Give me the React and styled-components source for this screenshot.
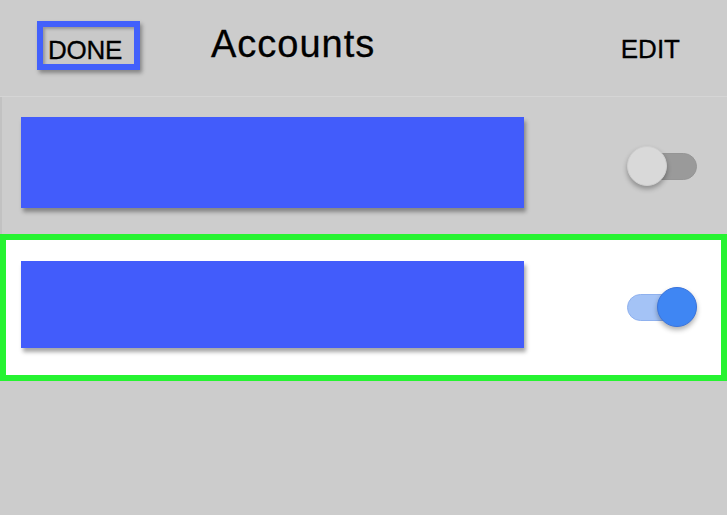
import React, { useState } from "react";
import styled, { createGlobalStyle } from "styled-components";

const Global = createGlobalStyle`
  html, body { margin: 0; padding: 0; background: #cccccc; }
  body { font-family: "Liberation Sans", Arial, sans-serif; }
`;

const Page = styled.div`
  width: 727px;
  height: 515px;
  background: #cccccc;
  overflow: hidden;
`;

const Header = styled.header`
  display: flex;
  align-items: flex-start;
  height: 97px;
  box-sizing: border-box;
  border-bottom: 1px solid #d5d5d5;
`;

const DoneButton = styled.button`
  box-sizing: border-box;
  margin: 21px 0 0 37px;
  width: 103px;
  height: 49px;
  border: 6px solid #4260fb;
  background: #c9c9c9;
  padding: 8px 0 0 5px;
  text-align: left;
  font-family: "Liberation Sans", Arial, sans-serif;
  font-size: 26px;
  line-height: 26px;
  color: #000;
  -webkit-text-stroke: 0.3px #000;
  letter-spacing: -0.3px;
  box-shadow: 2px 3px 4px rgba(0, 0, 0, 0.35), inset 2px 2px 3px rgba(0, 0, 0, 0.25);
  cursor: pointer;
`;

const Title = styled.h1`
  margin: 25px 0 0 71px;
  font-weight: 400;
  font-size: 38px;
  line-height: 38px;
  letter-spacing: 1px;
  color: #000;
  -webkit-text-stroke: 0.3px #000;
`;

const EditButton = styled.span`
  margin: 36px 47px 0 auto;
  font-size: 26px;
  line-height: 26px;
  color: #000;
  -webkit-text-stroke: 0.3px #000;
`;

const Row = styled.div`
  display: flex;
  align-items: flex-start;
  box-sizing: border-box;
  height: ${(p) => (p.$selected ? "147px" : "137px")};
  padding: ${(p) => (p.$selected ? "21px 24px 0 15px" : "20px 30px 0 19px")};
  background: ${(p) => (p.$selected ? "#ffffff" : "#cdcdcd")};
  border: ${(p) => (p.$selected ? "6px solid #26f331" : "none")};
  border-left: ${(p) => (p.$selected ? "6px solid #26f331" : "2px solid #c2c2c2")};
`;

const Redaction = styled.div`
  width: 503px;
  height: ${(p) => p.$h}px;
  background: #425cfb;
  box-shadow: 2px 4px 4px rgba(0, 0, 0, 0.35);
`;

const Toggle = styled.button`
  position: relative;
  margin: ${(p) => p.$mt}px 0 0 auto;
  width: 70px;
  height: 41px;
  padding: 0;
  border: none;
  background: transparent;
  cursor: pointer;
`;

const Track = styled.span`
  position: absolute;
  top: 7px;
  ${(p) => (p.$on ? "left: 0;" : "right: 0;")}
  width: 64px;
  height: 27px;
  box-sizing: border-box;
  border-radius: 14px;
  background: ${(p) => (p.$on ? "#a4c3f6" : "#9a9a9a")};
  border: 1px solid ${(p) => (p.$on ? "#8fb1ee" : "#959595")};
`;

const Knob = styled.span`
  position: absolute;
  top: 0;
  ${(p) => (p.$on ? "right: 0;" : "left: 0;")}
  width: 40px;
  height: 40px;
  box-sizing: border-box;
  border-radius: 50%;
  background: ${(p) => (p.$on ? "#3f86f3" : "#d9d9d9")};
  border: 1px solid ${(p) => (p.$on ? "#3a74dc" : "#cfcfcf")};
  box-shadow: 0 3px 5px rgba(0, 0, 0, 0.3);
`;

function Switch({ on, onClick, mt }) {
  return (
    <Toggle $mt={mt} onClick={onClick} aria-pressed={on}>
      <Track $on={on} />
      <Knob $on={on} />
    </Toggle>
  );
}

export default function App() {
  const [a, setA] = useState(false);
  const [b, setB] = useState(true);
  return (
    <Page>
      <Global />
      <Header>
        <DoneButton>DONE</DoneButton>
        <Title>Accounts</Title>
        <EditButton>EDIT</EditButton>
      </Header>
      <Row>
        <Redaction $h={91} />
        <Switch on={a} onClick={() => setA(!a)} mt={29} />
      </Row>
      <Row $selected>
        <Redaction $h={87} />
        <Switch on={b} onClick={() => setB(!b)} mt={26} />
      </Row>
    </Page>
  );
}
